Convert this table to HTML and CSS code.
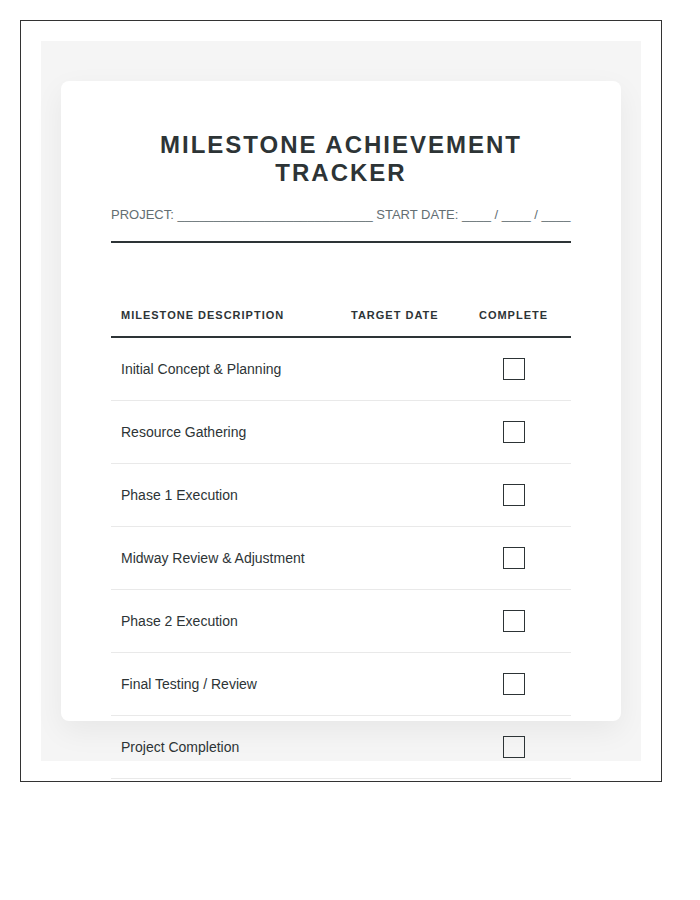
FILE: index.html
```html
<!DOCTYPE html>
<html>
<head>
<meta charset="utf-8">
<link rel="stylesheet" href="styles.css">
</head>
<body>
<div class="frame">
  <div class="stage">
    <div class="card">
      <header class="sheet-head">
        <h1 class="title">MILESTONE ACHIEVEMENT TRACKER</h1>
        <div class="meta">PROJECT: ___________________________ START DATE: ____ / ____ / ____</div>
      </header>
      <table class="tracker">
        <thead>
          <tr>
            <th class="col-desc">MILESTONE DESCRIPTION</th>
            <th class="col-date">TARGET DATE</th>
            <th class="col-done">COMPLETE</th>
          </tr>
        </thead>
        <tbody>
          <tr><td>Initial Concept &amp; Planning</td><td></td><td class="col-done"><span class="box"></span></td></tr>
          <tr><td>Resource Gathering</td><td></td><td class="col-done"><span class="box"></span></td></tr>
          <tr><td>Phase 1 Execution</td><td></td><td class="col-done"><span class="box"></span></td></tr>
          <tr><td>Midway Review &amp; Adjustment</td><td></td><td class="col-done"><span class="box"></span></td></tr>
          <tr><td>Phase 2 Execution</td><td></td><td class="col-done"><span class="box"></span></td></tr>
          <tr><td>Final Testing / Review</td><td></td><td class="col-done"><span class="box"></span></td></tr>
          <tr><td>Project Completion</td><td></td><td class="col-done"><span class="box"></span></td></tr>
        </tbody>
      </table>
    </div>
  </div>
</div>
</body>
</html>
```

FILE: styles.css
```css
* { box-sizing: border-box; }
html, body { margin: 0; padding: 0; background: #fff; }
body {
  padding: 20px;
  font-family: "Liberation Sans", Arial, sans-serif;
  color: #2d3436;
}
.frame {
  width: 642px;
  height: 762px;
  border: 1px solid #333;
  padding: 20px;
}
.stage {
  width: 600px;
  height: 720px;
  background: #f5f5f5;
  padding: 40px 20px;
}
.card {
  height: 640px;
  background: #fff;
  border-radius: 8px;
  box-shadow: 0 10px 30px rgba(0, 0, 0, 0.06);
  padding: 50px;
}
.sheet-head {
  border-bottom: 2px solid #2d3436;
  padding-bottom: 18px;
}
.title {
  margin: 0 0 20px;
  font-size: 24px;
  line-height: 28px;
  font-weight: bold;
  letter-spacing: 2px;
  text-align: center;
  color: #2d3436;
}
.meta {
  font-size: 13px;
  line-height: 16px;
  color: #636e72;
  white-space: nowrap;
}
.tracker {
  width: 100%;
  margin-top: 52px;
  border-collapse: collapse;
  table-layout: fixed;
}
.tracker th {
  font-size: 11px;
  line-height: 13px;
  font-weight: bold;
  letter-spacing: 1px;
  text-align: left;
  padding: 14px 10px;
  border-bottom: 2px solid #2d3436;
  color: #2d3436;
}
.tracker .col-desc { width: 50%; }
.tracker .col-date { width: 25%; }
.tracker .col-done { width: 25%; text-align: center; }
.tracker td {
  font-size: 14px;
  padding: 20px 10px;
  border-bottom: 1px solid #e9e9e9;
  vertical-align: middle;
  height: 63px;
}
.box {
  display: inline-block;
  width: 22px;
  height: 22px;
  border: 1.5px solid #2d3436;
  vertical-align: middle;
}
```
